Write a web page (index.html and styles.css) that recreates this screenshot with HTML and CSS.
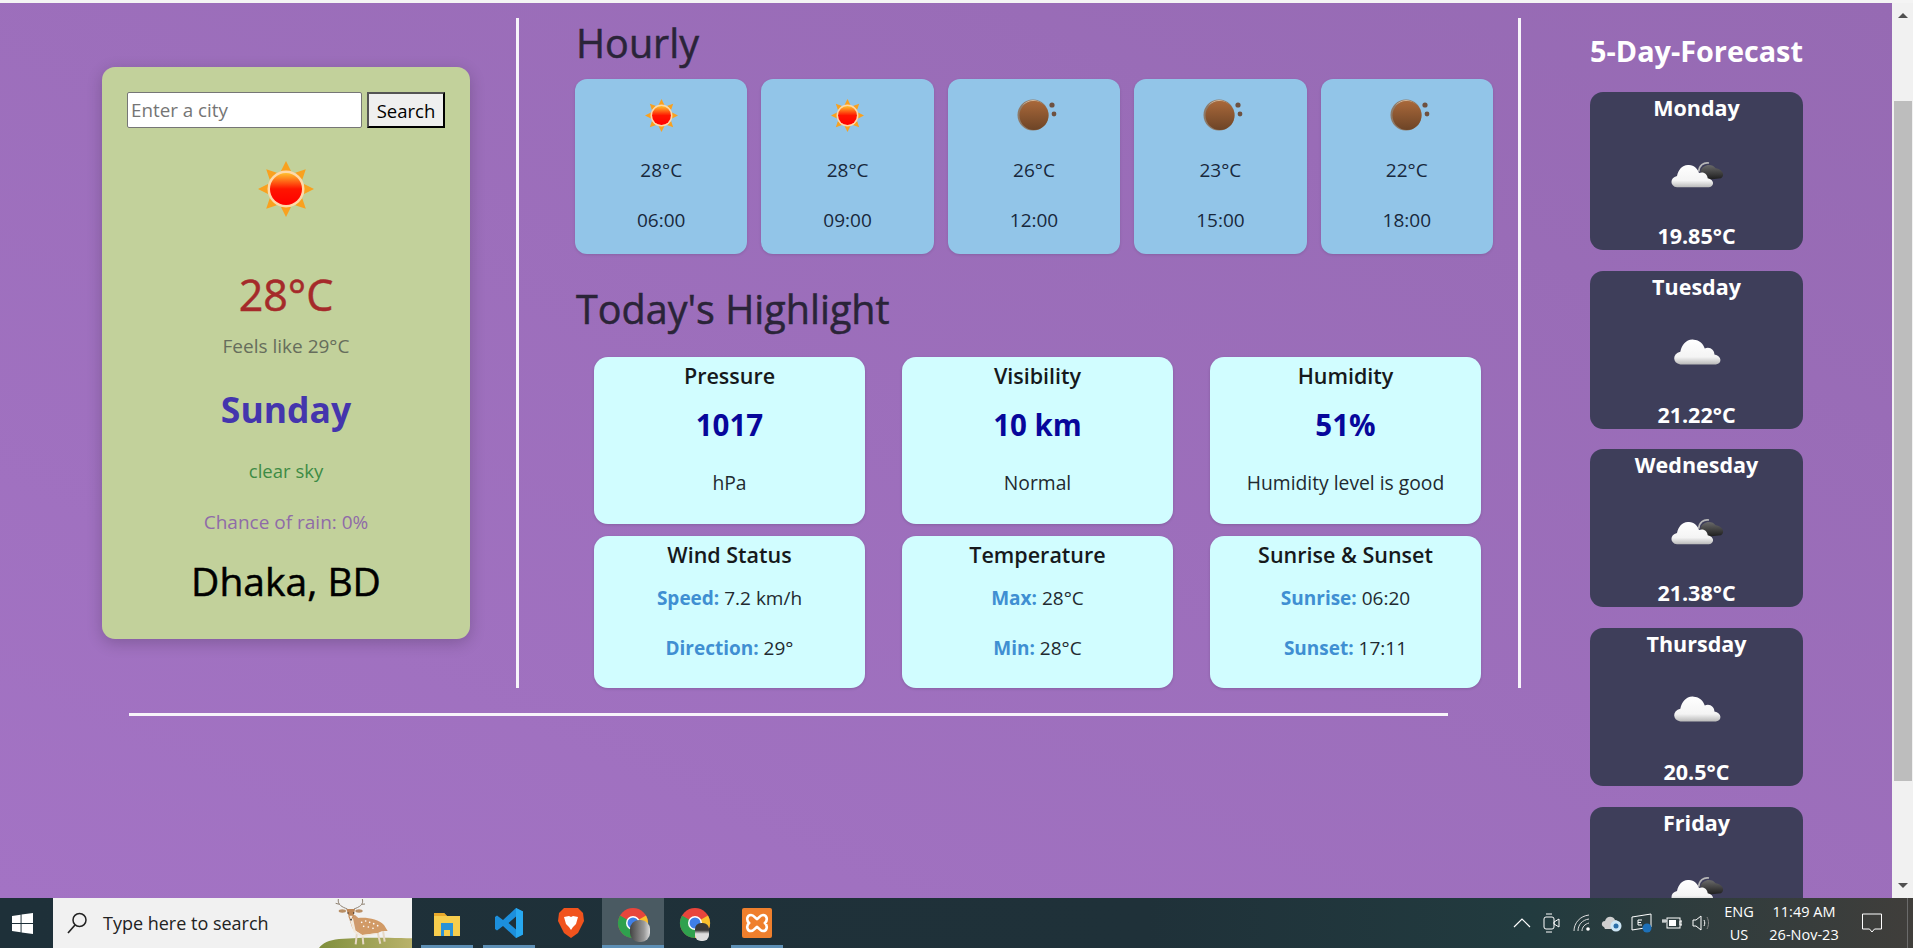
FILE: index.html
```html
<!DOCTYPE html>
<html lang="en">
<head>
    <meta charset="UTF-8">
    <meta name="viewport" content="width=device-width, initial-scale=1.0">
    <title>Weather App</title>
    <link rel="stylesheet" href="styles.css">
</head>
<body>
    <svg class="defs" aria-hidden="true">
        <defs>
            <linearGradient id="sunCore" x1="0" y1="0" x2="0" y2="1">
                <stop offset="0" stop-color="#ffc02e"/>
                <stop offset="0.5" stop-color="#ff1500"/>
                <stop offset="1" stop-color="#ff0000"/>
            </linearGradient>
            <linearGradient id="moonBody" x1="0" y1="0" x2="0" y2="1">
                <stop offset="0" stop-color="#a9683a"/>
                <stop offset="1" stop-color="#6d4426"/>
            </linearGradient>
            <linearGradient id="cloudWhite" x1="0" y1="0" x2="0" y2="1">
                <stop offset="0" stop-color="#ffffff"/>
                <stop offset="0.7" stop-color="#f4f4f4"/>
                <stop offset="1" stop-color="#b9b9b9"/>
            </linearGradient>
            <linearGradient id="cloudDark" x1="0" y1="0" x2="0" y2="1">
                <stop offset="0" stop-color="#6a6a6a"/>
                <stop offset="1" stop-color="#1c1c1c"/>
            </linearGradient>
            <linearGradient id="hill" x1="0" y1="0" x2="1" y2="0">
                <stop offset="0" stop-color="#7f8f3c"/>
                <stop offset="1" stop-color="#b9b26a"/>
            </linearGradient>
            <symbol id="sun" viewBox="0 0 56 56">
                <g fill="#f9a11f">
                    <path d="M28 0l5 10h-10z"/>
                    <path d="M28 0l5 10h-10z" transform="rotate(45 28 28)"/>
                    <path d="M28 0l5 10h-10z" transform="rotate(90 28 28)"/>
                    <path d="M28 0l5 10h-10z" transform="rotate(135 28 28)"/>
                    <path d="M28 0l5 10h-10z" transform="rotate(180 28 28)"/>
                    <path d="M28 0l5 10h-10z" transform="rotate(225 28 28)"/>
                    <path d="M28 0l5 10h-10z" transform="rotate(270 28 28)"/>
                    <path d="M28 0l5 10h-10z" transform="rotate(315 28 28)"/>
                </g>
                <circle cx="28" cy="28" r="18.5" fill="#ffd9a8"/>
                <circle cx="28" cy="28" r="16" fill="url(#sunCore)"/>
            </symbol>
            <symbol id="moon" viewBox="0 0 50 50">
                <circle cx="24" cy="25" r="15.5" fill="#8d7a68"/>
                <path d="M24 10a15 15 0 0 0-11 6a15 15 0 0 1 22 0a15 15 0 0 0-11-6z" fill="#d9b898"/>
                <circle cx="25" cy="25.500" r="14.500" fill="url(#moonBody)"/>
                <circle cx="43" cy="15" r="2.600" fill="#6e5140"/>
                <circle cx="45" cy="24" r="2.400" fill="#6e5140"/>
            </symbol>
            <symbol id="cloud" viewBox="-10 16 270 162">
                <path d="M80 109C58 106 58 80 80 75C84 56 96 40 116 42C132 42 142 54 146 66C160 60 172 70 172 82C192 86 194 106 176 109Z" fill="url(#cloudWhite)"/>
            </symbol>
            <symbol id="cloudBroken" viewBox="-10 0 300 180">
                <path d="M145 62C146 44 160 33 176 36" fill="none" stroke="#b8b8b8" stroke-width="5"/>
                <path d="M150 62C156 38 186 36 196 52C216 54 226 74 212 82L170 86Z" fill="url(#cloudDark)"/>
                <path d="M80 109C58 106 58 80 80 75C84 56 96 40 116 42C132 42 142 54 146 66C160 60 172 70 172 82C192 86 194 106 176 109Z" fill="url(#cloudWhite)"/>
            </symbol>
            <symbol id="chrome" viewBox="0 0 32 32">
                <circle cx="16" cy="16" r="15" fill="#e8453c"/>
                <path d="M16 16L3 8.500A15 15 0 0 0 16 31z" fill="#2fa14e"/>
                <path d="M16 16L16 31A15 15 0 0 0 29 8.500z" fill="#fbc02d"/>
                <circle cx="16" cy="16" r="7" fill="#fff"/>
                <circle cx="16" cy="16" r="5.500" fill="#3f7fe8"/>
            </symbol>
        </defs>
    </svg>

    <div class="window-edge"></div>
    <div class="window">
        <div class="page">
            <div class="main">
                <aside class="sidebar">
                    <div class="current">
                        <form class="search">
                            <input type="text" class="city" placeholder="Enter a city">
                            <button type="button" class="go">Search</button>
                        </form>
                        <svg class="current-icon"><use href="#sun"/></svg>
                        <p class="temp">28°C</p>
                        <p class="feels">Feels like 29°C</p>
                        <p class="day">Sunday</p>
                        <p class="desc">clear sky</p>
                        <p class="rain">Chance of rain: 0%</p>
                        <p class="place">Dhaka, BD</p>
                    </div>
                </aside>

                <section class="middle">
                    <h2 class="heading">Hourly</h2>
                    <div class="hourly">
                        <div class="hour">
                            <div class="hour-icon"><svg class="icon-sun"><use href="#sun"/></svg></div>
                            <p>28°C</p>
                            <p>06:00</p>
                        </div>
                        <div class="hour">
                            <div class="hour-icon"><svg class="icon-sun"><use href="#sun"/></svg></div>
                            <p>28°C</p>
                            <p>09:00</p>
                        </div>
                        <div class="hour">
                            <div class="hour-icon"><svg class="icon-moon"><use href="#moon"/></svg></div>
                            <p>26°C</p>
                            <p>12:00</p>
                        </div>
                        <div class="hour">
                            <div class="hour-icon"><svg class="icon-moon"><use href="#moon"/></svg></div>
                            <p>23°C</p>
                            <p>15:00</p>
                        </div>
                        <div class="hour">
                            <div class="hour-icon"><svg class="icon-moon"><use href="#moon"/></svg></div>
                            <p>22°C</p>
                            <p>18:00</p>
                        </div>
                    </div>

                    <h2 class="heading today">Today's Highlight</h2>
                    <div class="highlights">
                        <div class="box">
                            <h3>Pressure</h3>
                            <p class="value">1017</p>
                            <p class="note">hPa</p>
                        </div>
                        <div class="box">
                            <h3>Visibility</h3>
                            <p class="value">10 km</p>
                            <p class="note">Normal</p>
                        </div>
                        <div class="box">
                            <h3>Humidity</h3>
                            <p class="value">51%</p>
                            <p class="note">Humidity level is good</p>
                        </div>
                        <div class="box">
                            <h3>Wind Status</h3>
                            <p class="line"><b>Speed:</b> 7.2 km/h</p>
                            <p class="line"><b>Direction:</b> 29°</p>
                        </div>
                        <div class="box">
                            <h3>Temperature</h3>
                            <p class="line"><b>Max:</b> 28°C</p>
                            <p class="line"><b>Min:</b> 28°C</p>
                        </div>
                        <div class="box">
                            <h3>Sunrise &amp; Sunset</h3>
                            <p class="line"><b>Sunrise:</b> 06:20</p>
                            <p class="line"><b>Sunset:</b> 17:11</p>
                        </div>
                    </div>
                </section>

                <section class="forecast">
                    <h2 class="forecast-title">5-Day-Forecast</h2>
                    <div class="days">
                        <div class="fday">
                            <h3>Monday</h3>
                            <svg class="fday-icon"><use href="#cloudBroken"/></svg>
                            <p>19.85°C</p>
                        </div>
                        <div class="fday">
                            <h3>Tuesday</h3>
                            <svg class="fday-icon"><use href="#cloud"/></svg>
                            <p>21.22°C</p>
                        </div>
                        <div class="fday">
                            <h3>Wednesday</h3>
                            <svg class="fday-icon"><use href="#cloudBroken"/></svg>
                            <p>21.38°C</p>
                        </div>
                        <div class="fday">
                            <h3>Thursday</h3>
                            <svg class="fday-icon"><use href="#cloud"/></svg>
                            <p>20.5°C</p>
                        </div>
                        <div class="fday">
                            <h3>Friday</h3>
                            <svg class="fday-icon"><use href="#cloudBroken"/></svg>
                        </div>
                    </div>
                </section>
            </div>
            <hr class="rule">
        </div>

        <div class="scrollbar">
            <span class="arrow-up"></span>
            <span class="thumb"></span>
            <span class="arrow-down"></span>
        </div>
    </div>

    <footer class="taskbar">
        <div class="start">
            <svg width="21" height="21" viewBox="0 0 22 22"><path d="M0 3.200l9-1.300v8.500H0zM10 1.700L22 0v10.400H10zM0 11.500h9v8.600l-9-1.300zM10 11.500h12V22l-12-1.700z" fill="#fff"/></svg>
        </div>
        <div class="searchbox">
            <svg width="24" height="24" viewBox="0 0 24 24"><circle cx="14.500" cy="9" r="6.500" fill="none" stroke="#222" stroke-width="1.500"/><path d="M10 14L3 22" stroke="#222" stroke-width="1.700"/></svg>
            <span class="searchbox-text">Type here to search</span>
            <svg class="deer" width="93" height="50" viewBox="0 9 279 150">
                <path d="M0 159C10 145 30 135 60 132L130 128C180 128 240 128 279 130V159Z" fill="url(#hill)"/>
                <path d="M85 42C70 36 55 30 58 12M62 28L50 25M105 42C120 36 135 30 130 12M128 28L138 27" fill="none" stroke="#8f8272" stroke-width="3"/>
                <ellipse cx="70" cy="48" rx="11" ry="5" fill="#b98f66"/>
                <ellipse cx="120" cy="48" rx="11" ry="5" fill="#b98f66"/>
                <path d="M114 112L110 148M130 116L133 148M176 112L184 146M192 106L197 140" fill="none" stroke="#e6d8c4" stroke-width="6"/>
                <path d="M106 72C130 64 176 70 195 90L206 108L190 108L176 114L130 120L108 106Z" fill="#d19a66"/>
                <path d="M88 64L108 60L124 74L118 108L100 100Z" fill="#cf9a6c"/>
                <path d="M92 72L102 70L110 108L130 120L176 114L170 118L128 126L104 112Z" fill="#f2e9dc"/>
                <path d="M82 42L108 42L103 66L96 76L90 66Z" fill="#bd8656"/>
                <path d="M91 62L101 62L96 76Z" fill="#f5efe6"/>
                <circle cx="96" cy="74" r="2.500" fill="#2a2a2a"/>
                <circle cx="87" cy="54" r="2" fill="#2a2a2a"/>
                <circle cx="104" cy="54" r="2" fill="#2a2a2a"/>
                <g fill="#fff">
                    <circle cx="128" cy="82" r="2.500"/><circle cx="140" cy="78" r="2.500"/><circle cx="152" cy="82" r="2.500"/>
                    <circle cx="164" cy="86" r="2.500"/><circle cx="176" cy="92" r="2.500"/><circle cx="134" cy="94" r="2.500"/>
                    <circle cx="148" cy="96" r="2.500"/><circle cx="162" cy="100" r="2.500"/>
                </g>
            </svg>
        </div>
        <div class="apps">
            <div class="app running">
                <svg width="30" height="30" viewBox="0 0 30 30"><path d="M2 5h10l3 3h13v20H2z" fill="#f7cd4d"/><path d="M2 5h10l3 3H2z" fill="#e9a92b"/><path d="M9 15h12v13h-3v-6h-6v6H9z" fill="#2b92d8"/></svg>
            </div>
            <div class="app running">
                <svg width="30" height="32" viewBox="0 0 30 32"><path d="M22 1L29 4.500V27.500L22 31L9 19L3 23.500L1 22V10L3 8.500L9 13zM22 9.500L14.500 16L22 22.500z" fill="#1c8fdc"/><path d="M22 1L29 4.500V27.500L22 31z" fill="#27a8f0"/></svg>
            </div>
            <div class="app">
                <svg width="28" height="32" viewBox="0 0 28 32"><path d="M7 1H21L26 6L27 14L21 26L14 31L7 26L1 14L2 6z" fill="#f1531d"/><path d="M7 10L12 9L14 10L16 9L21 10L19 17L16 20L14 23L12 20L9 17z" fill="#fff"/></svg>
            </div>
            <div class="app running active">
                <svg width="32" height="32"><use href="#chrome"/></svg>
                <span class="avatar avatar-big"></span>
            </div>
            <div class="app">
                <svg width="32" height="32"><use href="#chrome"/></svg>
                <span class="avatar"></span>
            </div>
            <div class="app running">
                <svg width="30" height="30" viewBox="0 0 30 30"><rect width="30" height="30" rx="2" fill="#ef7f2d"/><path d="M9 7c3 0 4 3 6 4 2-1 3-4 6-4 4 0 5 5 2 8 3 3 2 8-2 8-3 0-4-3-6-4-2 1-3 4-6 4-4 0-5-5-2-8-3-3-2-8 2-8z" fill="none" stroke="#fff" stroke-width="2.600"/></svg>
            </div>
        </div>
        <div class="tray">
            <div class="slot"><svg width="18" height="12" viewBox="0 0 18 12"><path d="M1 10L9 2l8 8" fill="none" stroke="#fff" stroke-width="1.200"/></svg></div>
            <div class="slot"><svg width="18" height="20" viewBox="0 0 18 20"><rect x="1" y="4" width="10" height="12" rx="2" fill="none" stroke="#fff"/><path d="M11 9l5-3v8l-5-3zM3 1h6M3 19h6" fill="none" stroke="#fff"/></svg></div>
            <div class="slot"><svg width="18" height="18" viewBox="0 0 18 18"><path d="M1 17C1 9 7 2 16 1M5 17C5 11 9 6 16 5M9 17C9 13 12 10 16 9" fill="none" stroke="#ddd"/><circle cx="15" cy="15" r="1.800" fill="#fff"/></svg></div>
            <div class="slot"><svg width="22" height="18" viewBox="0 0 22 18"><path d="M3 13C0 12 0 7 4 7C5 2 12 1 14 6C16 6 17 7 17 8L10 15H4z" fill="#cfcfcf"/><circle cx="15" cy="12" r="5.500" fill="#cde6f5"/><circle cx="15" cy="12" r="2.500" fill="#2a6ea8"/></svg></div>
            <div class="slot"><svg width="22" height="20" viewBox="0 0 22 20"><path d="M1 4L20 1V14L1 17z" fill="none" stroke="#fff"/><path d="M7 7h4M7 7v5h4M7 9.500h3" fill="none" stroke="#fff"/><circle cx="16" cy="15" r="4.500" fill="#1d70b8"/></svg></div>
            <div class="slot"><svg width="20" height="12" viewBox="0 0 20 12"><rect x="5" y="1" width="13" height="10" fill="none" stroke="#fff"/><rect x="7" y="3" width="7" height="6" fill="#fff"/><path d="M18 4h2v4h-2zM0 4h5M1 2v4M3 2v4" stroke="#fff" fill="none"/></svg></div>
            <div class="slot"><svg width="20" height="16" viewBox="0 0 20 16"><path d="M1 5h3l5-4v14l-5-4H1z" fill="none" stroke="#fff"/><path d="M12 5c1 2 1 4 0 6" fill="none" stroke="#fff"/><path d="M15 2c2 4 2 8 0 12" fill="none" stroke="#888"/></svg></div>
            <div class="lang"><span>ENG</span><span>US</span></div>
            <div class="clock"><span>11:49 AM</span><span>26-Nov-23</span></div>
            <div class="notify"><svg width="20" height="20" viewBox="0 0 20 20"><path d="M.500 1h19v15h-7l-2.500 3-2.500-3h-7z" fill="none" stroke="#fff"/></svg></div>
            <div class="show-desktop"></div>
        </div>
    </footer>
</body>
</html>
```

FILE: styles.css
```css
html, body {
    margin: 0;
    height: 100%;
    overflow: hidden;
}
body {
    font-family: "Open Sans", sans-serif;
    display: flex;
    flex-direction: column;
    background: #fff;
}
h2, h3, p {
    margin: 0;
    font-weight: normal;
}
.defs {
    position: absolute;
    width: 0;
    height: 0;
}
.window-edge {
    height: 3px;
    background: #f4f4f4;
}
.window {
    flex: 1;
    display: flex;
    min-height: 0;
}
.page {
    flex: 1;
    overflow: hidden;
    background: linear-gradient(to top right, #a373c4, #966ab3);
}
.main {
    display: flex;
    margin-top: 15px;
    height: 670px;
}

/* left card */
.sidebar {
    width: 516px;
    flex: none;
    border-right: 3px solid #f7f4fa;
}
.current {
    width: 318px;
    height: 547px;
    margin: 49px 0 0 102px;
    padding: 25px 25px 0;
    background: #c2d19b;
    border-radius: 13px;
    box-shadow: 0 4px 16px rgba(0, 0, 0, 0.2);
    text-align: center;
}
.search {
    display: flex;
    gap: 5px;
}
.city {
    width: 235px;
    height: 36px;
    box-sizing: border-box;
    padding: 0 3px;
    border: 1px solid #767676;
    border-radius: 2px;
    font: 18.8px "Open Sans", sans-serif;
    background: #fff;
}
.city::placeholder {
    color: #757575;
}
.go {
    width: 78px;
    height: 36px;
    box-sizing: border-box;
    padding: 0;
    border: 2px outset #000;
    background: #efefef;
    color: #000;
    font: 18.5px "Open Sans", sans-serif;
}
.current-icon {
    display: block;
    width: 56px;
    height: 56px;
    margin: 33px auto 0;
}
.temp {
    margin-top: 48px;
    color: #a52a2a;
    font-size: 43px;
    -webkit-text-stroke: 0.5px #a52a2a;
    line-height: 60px;
}
.feels {
    margin-top: 6px;
    color: #666d5c;
    font-size: 19px;
    line-height: 30px;
}
.day {
    margin-top: 23px;
    color: #4435ad;
    font-size: 35.5px;
    font-weight: 700;
    line-height: 50px;
}
.desc {
    margin-top: 22px;
    color: #3d8b45;
    font-size: 18.5px;
    line-height: 30px;
}
.rain {
    margin-top: 21px;
    color: #8f6ba8;
    font-size: 19px;
    line-height: 30px;
}
.place {
    margin-top: 19px;
    color: #000;
    font-size: 39px;
    -webkit-text-stroke: 0.5px #000;
    line-height: 50px;
}

/* middle */
.middle {
    width: 999px;
    flex: none;
    border-right: 3px solid #f7f4fa;
}
.heading {
    margin-left: 57px;
    color: #2a2438;
    font-size: 39.5px;
    -webkit-text-stroke: 0.5px #2a2438;
    line-height: 51px;
}
.today {
    margin-top: 30px;
}
.hourly {
    display: grid;
    grid-template-columns: repeat(5, 1fr);
    gap: 14px;
    width: 918px;
    margin: 10px 0 0 56px;
}
.hour {
    height: 175px;
    padding-top: 11px;
    box-sizing: border-box;
    background: #92c5e8;
    border-radius: 12px;
    box-shadow: 0 1px 3px rgba(0, 0, 0, 0.12);
    text-align: center;
    color: #18283c;
    font-size: 19px;
}
.hour p {
    line-height: 30px;
    margin-top: 20px;
}
.hour-icon {
    display: flex;
    justify-content: center;
    align-items: center;
    height: 50px;
    margin-bottom: -5px;
}
.icon-sun {
    width: 33px;
    height: 33px;
}
.icon-moon {
    width: 50px;
    height: 50px;
}
.highlights {
    display: grid;
    grid-template-columns: repeat(3, 271px);
    grid-template-rows: 167px 152px;
    gap: 12px 37px;
    margin: 22px 0 0 75px;
}
.box {
    padding-top: 4px;
    box-sizing: border-box;
    background: #d1fdff;
    border-radius: 14px;
    box-shadow: 0 1px 3px rgba(0, 0, 0, 0.15);
    text-align: center;
    color: #1f2a30;
}
.box h3 {
    font-size: 21.5px;
    font-weight: 600;
    line-height: 30px;
    color: #16191c;
}
.value {
    margin-top: 14px;
    font-size: 29.5px;
    font-weight: 700;
    line-height: 40px;
    color: #07079b;
}
.note {
    margin-top: 23px;
    font-size: 19.3px;
    line-height: 30px;
}
.line {
    margin-top: 20px;
    font-size: 19px;
    line-height: 30px;
}
.box h3 + .line {
    margin-top: 13px;
}
.line b {
    color: #3f8fd2;
    font-weight: 700;
}

/* right column */
.forecast {
    flex: 1;
    padding-left: 69px;
}
.forecast-title {
    width: 213px;
    color: #fff;
    font-size: 28.8px;
    font-weight: 700;
    line-height: 40px;
    margin-top: 13px;
    text-align: center;
    white-space: nowrap;
}
.days {
    display: flex;
    flex-direction: column;
    gap: 20.7px;
    margin-top: 21px;
}
.fday {
    width: 213px;
    height: 158px;
    flex: none;
    padding-top: 1px;
    box-sizing: border-box;
    background: #3e3e5a;
    border-radius: 13px;
    color: #fff;
    text-align: center;
}
.fday h3 {
    font-size: 21.5px;
    font-weight: 700;
    line-height: 30px;
}
.fday-icon {
    display: block;
    width: 100px;
    height: 60px;
    margin: 28px auto 0;
}
.fday p {
    margin-top: 12px;
    font-size: 21.5px;
    font-weight: 700;
    line-height: 26px;
}
.rule {
    width: 1319px;
    height: 3px;
    margin: 25px 0 0 129px;
    border: 0;
    background: #f7f4fa;
}

/* fake scrollbar, part of the screenshot */
.scrollbar {
    width: 21px;
    flex: none;
    display: flex;
    flex-direction: column;
    align-items: center;
    background: #f1f1f1;
}
.arrow-up {
    width: 0;
    height: 0;
    margin-top: 10px;
    border: 5px solid transparent;
    border-top: 0;
    border-bottom: 5px solid #505050;
}
.thumb {
    width: 18px;
    height: 680px;
    margin-top: 83px;
    background: #bdbdbd;
}
.arrow-down {
    width: 0;
    height: 0;
    margin-top: auto;
    margin-bottom: 10px;
    border: 5px solid transparent;
    border-bottom: 0;
    border-top: 5px solid #505050;
}

/* taskbar */
.taskbar {
    height: 50px;
    flex: none;
    display: flex;
    align-items: stretch;
    background: linear-gradient(to right, #1e3039 0%, #1f3139 60%, #223b3f 80%, #403e3b 100%);
    color: #fff;
}
.start {
    width: 41px;
    padding-left: 12px;
    display: flex;
    align-items: center;
}
.searchbox {
    width: 359px;
    display: flex;
    align-items: center;
    background: #f1f1f1;
    color: #222;
    padding-left: 12px;
    box-sizing: border-box;
    position: relative;
}
.searchbox-text {
    margin-left: 14px;
    font-size: 18px;
}
.deer {
    position: absolute;
    right: 0;
    top: 0;
}
.apps {
    display: flex;
    margin-left: 4px;
}
.app {
    width: 62px;
    display: flex;
    align-items: center;
    justify-content: center;
    box-sizing: border-box;
    position: relative;
}
.running::after {
    content: "";
    position: absolute;
    left: 5px;
    right: 5px;
    bottom: 0;
    height: 3px;
    background: #5d8fb5;
}
.active {
    background: #4a5a62;
}
.active::after {
    left: 0;
    right: 0;
}
.avatar {
    position: absolute;
    left: 31px;
    top: 25px;
    width: 14px;
    height: 18px;
    border-radius: 6px;
    background: linear-gradient(#3a3a3a 40%, #ddd 60%);
}
.avatar-big {
    left: 28px;
    top: 22px;
    width: 20px;
    height: 22px;
    border-radius: 9px;
    background: linear-gradient(to right, #444, #999 70%, #ddd);
}
.tray {
    margin-left: auto;
    display: flex;
    font-size: 14.5px;
}
.slot {
    width: 30px;
    display: flex;
    align-items: center;
    justify-content: center;
}
.lang, .clock {
    display: flex;
    flex-direction: column;
    justify-content: space-evenly;
    align-items: center;
    white-space: nowrap;
}
.lang {
    width: 44px;
}
.clock {
    width: 86px;
}
.notify {
    width: 50px;
    display: flex;
    align-items: center;
    justify-content: center;
}
.show-desktop {
    width: 5px;
    margin-left: 10px;
    border-left: 1px solid #6b6b6b;
}
```
